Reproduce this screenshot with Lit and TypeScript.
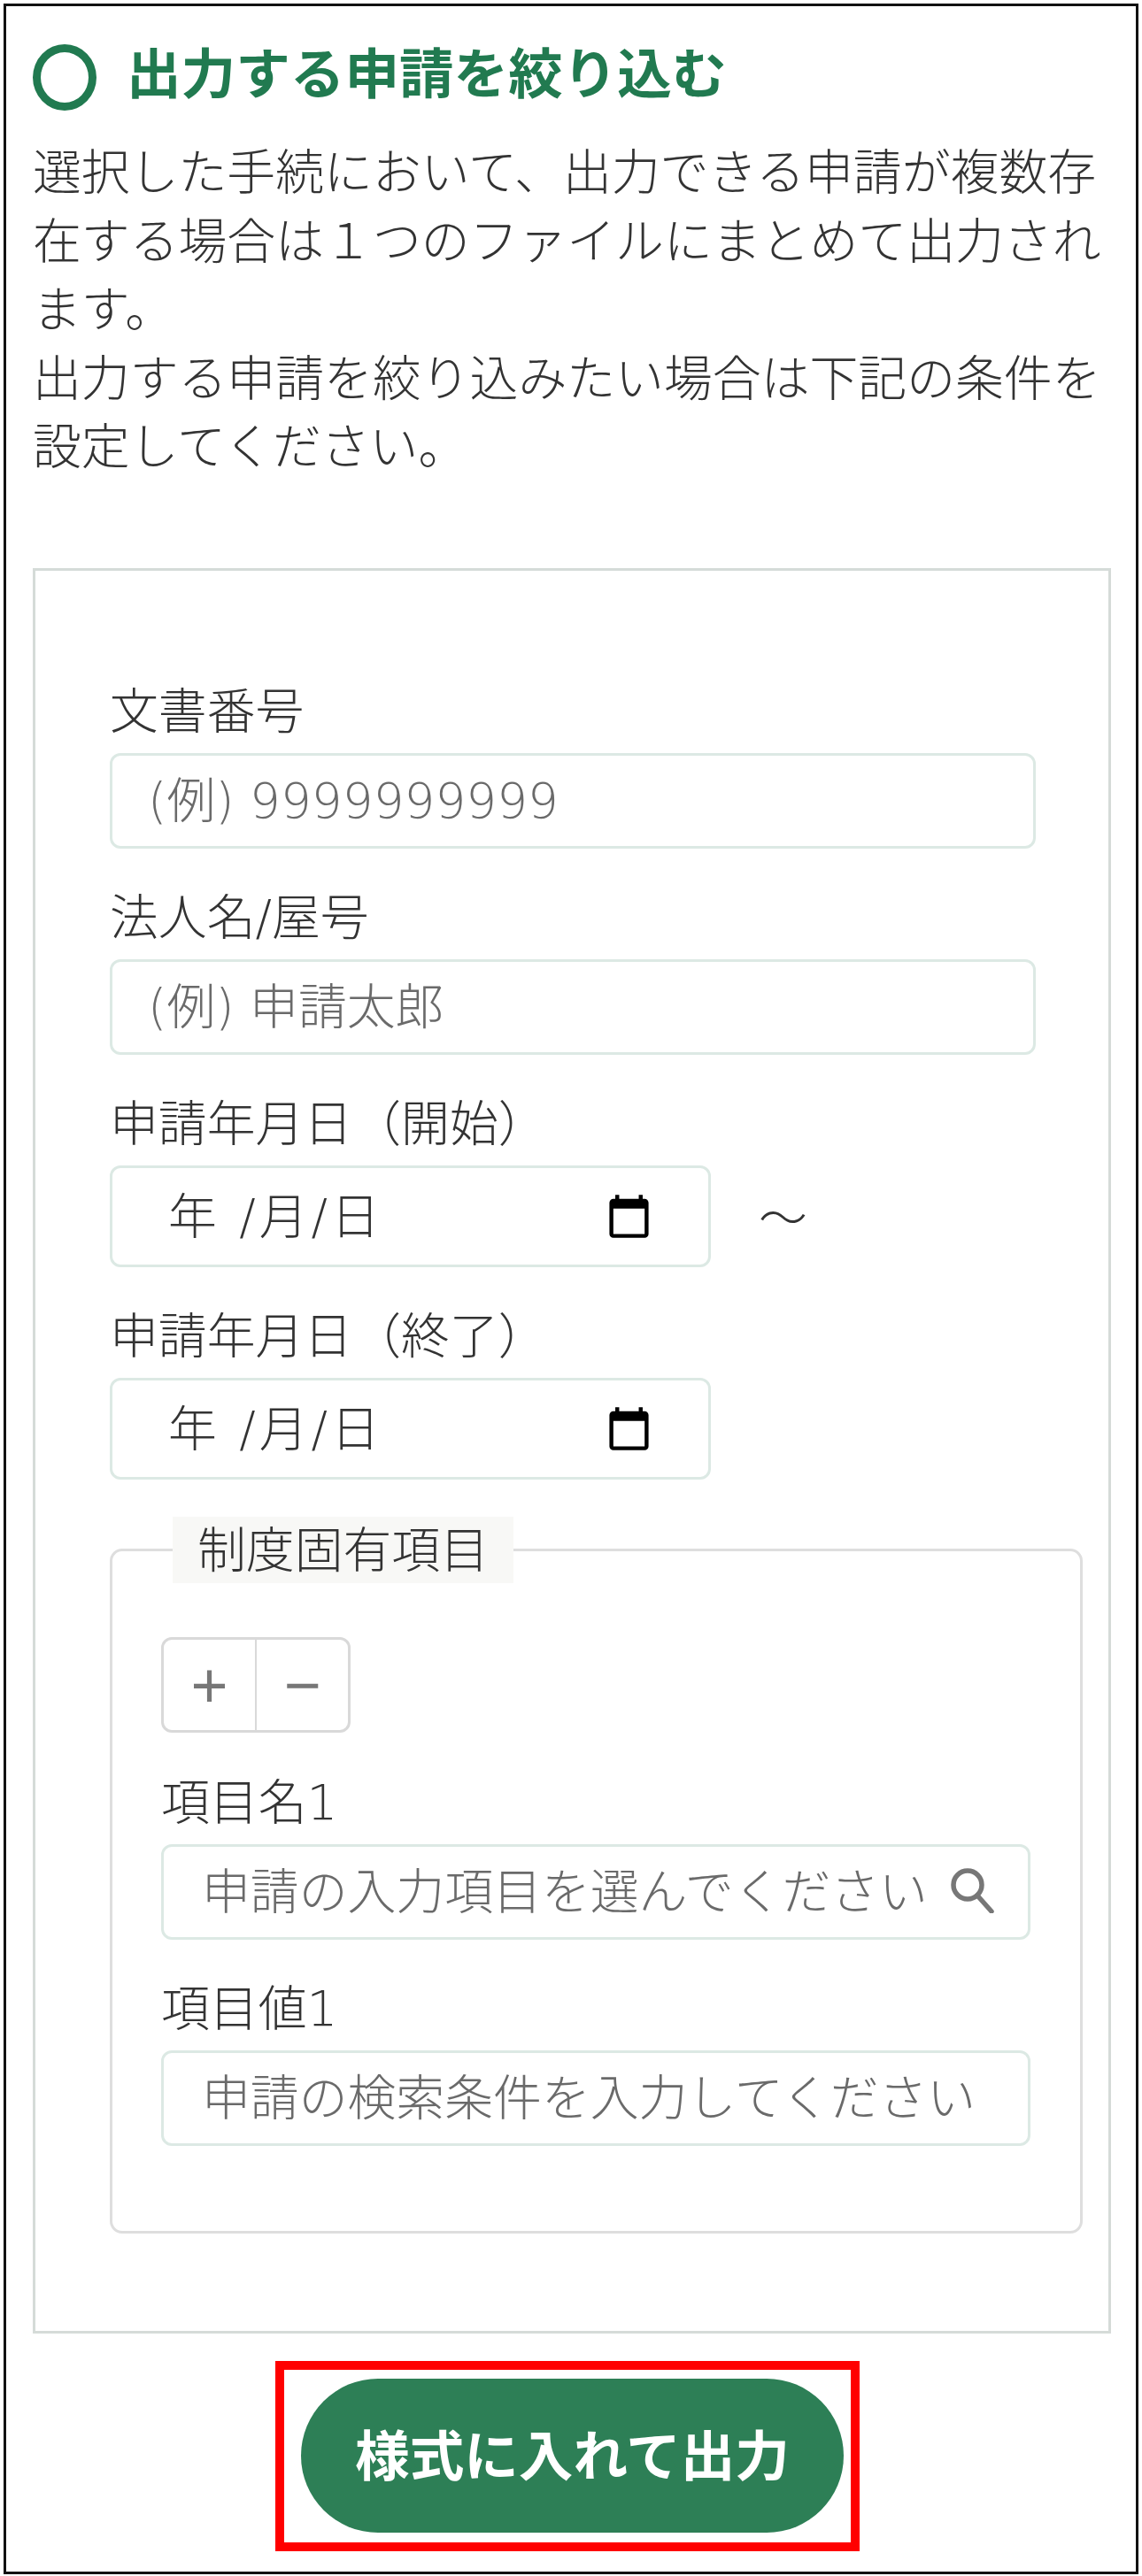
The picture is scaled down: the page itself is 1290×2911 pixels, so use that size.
import { LitElement, html, css, svg } from 'lit';
import { customElement } from 'lit/decorators.js';

const calendarIcon = svg`<path d="M20 3h-1V1h-2v2H7V1H5v2H4c-1.1 0-2 .9-2 2v16c0 1.1.9 2 2 2h16c1.1 0 2-.9 2-2V5c0-1.1-.9-2-2-2zm0 18H4V8h16v13z" />`;

@customElement('app-root')
export class AppRoot extends LitElement {
  static styles = css`
    :host {
      display: block;
      font-family: 'DejaVu Sans', 'Noto Sans CJK JP', sans-serif;
      font-size: 54.85px;
      font-weight: 300;
      color: #333;
      background: #fff;
    }

    * {
      box-sizing: border-box;
    }

    .frame {
      margin: 4px 4px 0 4px;
      height: 2905px;
      border: 3px solid #111;
      padding: 43px 27px 0 30px;
    }

    .heading {
      display: flex;
      align-items: center;
      gap: 34px;
      height: 75px;
      margin: 0;
      font-size: 61.6px;
      font-weight: 700;
      line-height: 75px;
      color: #217a50;
    }

    .heading-text {
      padding-bottom: 5px;
    }

    .ring {
      width: 72px;
      height: 75px;
      border: 9px solid #217a50;
      border-radius: 50%;
      flex: none;
    }

    .intro {
      margin: 32px 0 0;
      line-height: 77.5px;
      width: 1218px;
    }

    .panel {
      width: 1218px;
      height: 1995px;
      margin-top: 97px;
      border: 3px solid #d5dbd8;
      padding: 122px 0 0 84px;
    }

    .label {
      display: block;
      height: 70px;
      line-height: 74px;
      margin-bottom: 14px;
    }

    .field {
      margin-bottom: 41px;
    }

    input {
      display: block;
      width: 1046px;
      height: 108px;
      border: 3px solid #dce9e4;
      border-radius: 12px;
      background: #fff;
      padding: 0 12px 0 40px;
      font: inherit;
      color: inherit;
      outline: none;
    }

    input::placeholder {
      color: #6a6a6a;
      opacity: 1;
    }

    .date-row {
      display: flex;
      align-items: center;
      gap: 54px;
    }

    .date {
      display: flex;
      align-items: center;
      justify-content: space-between;
      width: 679px;
      height: 115px;
      border: 3px solid #dce9e4;
      border-radius: 12px;
      padding: 0 63px 0 63px;
      white-space: pre;
    }

    .date-text {
      padding-bottom: 9px;
      letter-spacing: 4px;
    }

    .date svg {
      width: 53px;
      height: 53px;
      fill: #000;
      flex: none;
    }

    .tilde {
      padding-bottom: 4px;
    }

    fieldset {
      width: 1099px;
      height: 810px;
      margin: 42px 0 0;
      border: 3px solid #dedede;
      border-radius: 14px;
      padding: 53px 55px 0;
    }

    legend {
      margin: 0 0 8px 13px;
      height: 75px;
      line-height: 76px;
      padding: 0 28px;
      background: #f8f8f6;
    }

    .stepper {
      display: flex;
      width: 214px;
      height: 108px;
      margin-bottom: 42px;
      border: 3px solid #d9d9d9;
      border-radius: 12px;
    }

    .stepper button {
      flex: 1;
      border: none;
      background: none;
      padding: 0;
      font-family: 'Liberation Sans', sans-serif;
      font-size: 72px;
      line-height: 1;
      color: #777;
    }

    .stepper button + button {
      border-left: 2px solid #d9d9d9;
    }

    .inner-input {
      position: relative;
    }

    .inner-input input {
      width: 982px;
      padding-left: 43px;
    }

    .search {
      position: absolute;
      right: 42px;
      top: 26px;
      width: 50px;
      height: 52px;
      fill: none;
      stroke: #777;
      stroke-width: 5.5;
    }

    .actions {
      width: 660px;
      height: 215px;
      margin: 31px 0 0 274px;
      border: 10px solid #f00;
      padding: 10px 8px 0 19px;
    }

    .submit {
      display: block;
      width: 613px;
      height: 174px;
      border: none;
      border-radius: 87px;
      background: #2d7f56;
      color: #fff;
      padding: 0 0 6px;
      font: inherit;
      font-size: 61.6px;
      font-weight: 700;
    }
  `;

  private _date() {
    return html`<div class="date">
      <span class="date-text">年 /月/日</span>
      <svg viewBox="0 0 24 24">${calendarIcon}</svg>
    </div>`;
  }

  render() {
    return html`
      <div class="frame">
        <h2 class="heading"><span class="ring"></span><span class="heading-text">出力する申請を絞り込む</span></h2>
        <p class="intro">
          選択した手続において、出力できる申請が複数存在する場合は１つのファイルにまとめて出力されます。<br />
          出力する申請を絞り込みたい場合は下記の条件を設定してください。
        </p>

        <div class="panel">
          <div class="field">
            <label class="label">文書番号</label>
            <input placeholder="(例) 9999999999" />
          </div>
          <div class="field">
            <label class="label">法人名/屋号</label>
            <input placeholder="(例) 申請太郎" />
          </div>
          <div class="field">
            <label class="label">申請年月日（開始）</label>
            <div class="date-row">${this._date()}<span class="tilde">～</span></div>
          </div>
          <div class="field">
            <label class="label">申請年月日（終了）</label>
            <div class="date-row">${this._date()}</div>
          </div>

          <fieldset>
            <legend>制度固有項目</legend>
            <div class="stepper"><button>+</button><button>−</button></div>
            <div class="field">
              <label class="label">項目名1</label>
              <div class="inner-input">
                <input placeholder="申請の入力項目を選んでください" />
                <svg class="search" viewBox="0 0 50 52">
                  <circle cx="20" cy="20" r="16" />
                  <path d="M31 32 L47 50" stroke-linecap="round" />
                </svg>
              </div>
            </div>
            <div class="field">
              <label class="label">項目値1</label>
              <div class="inner-input">
                <input placeholder="申請の検索条件を入力してください" />
              </div>
            </div>
          </fieldset>
        </div>

        <div class="actions">
          <button class="submit">様式に入れて出力</button>
        </div>
      </div>
    `;
  }
}
